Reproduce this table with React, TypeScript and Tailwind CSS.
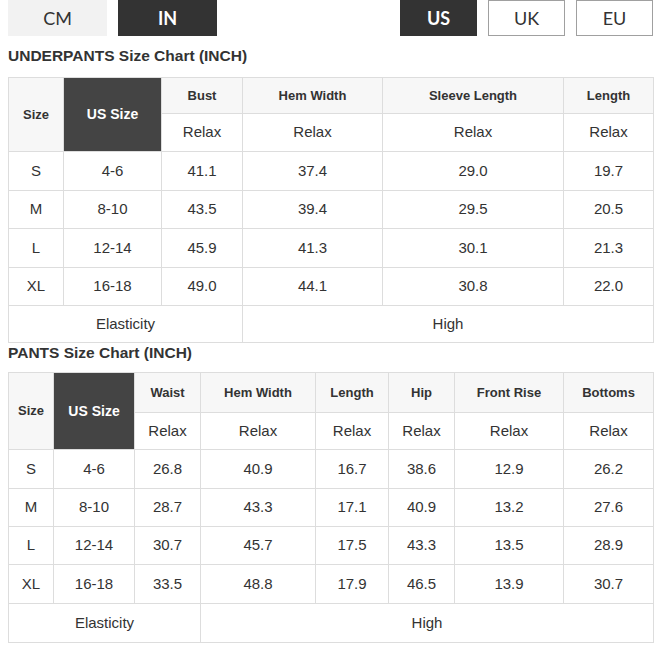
const font = { fontFamily: '"Liberation Sans", Arial, sans-serif' };

type Table = {
  title: string;
  widths: number[];
  headers: string[];
  rows: string[][];
  elasticSpan: number;
  headH: [number, number];
  rowH: number[];
};

const TABLES: Table[] = [
  {
    title: "UNDERPANTS Size Chart (INCH)",
    widths: [55, 98, 81, 140, 181, 90],
    headers: ["Bust", "Hem Width", "Sleeve Length", "Length"],
    rows: [
      ["S", "4-6", "41.1", "37.4", "29.0", "19.7"],
      ["M", "8-10", "43.5", "39.4", "29.5", "20.5"],
      ["L", "12-14", "45.9", "41.3", "30.1", "21.3"],
      ["XL", "16-18", "49.0", "44.1", "30.8", "22.0"],
    ],
    elasticSpan: 3,
    headH: [36, 38],
    rowH: [39, 38, 39, 38, 37],
  },
  {
    title: "PANTS Size Chart (INCH)",
    widths: [45, 81, 66, 115, 73, 66, 109, 90],
    headers: ["Waist", "Hem Width", "Length", "Hip", "Front Rise", "Bottoms"],
    rows: [
      ["S", "4-6", "26.8", "40.9", "16.7", "38.6", "12.9", "26.2"],
      ["M", "8-10", "28.7", "43.3", "17.1", "40.9", "13.2", "27.6"],
      ["L", "12-14", "30.7", "45.7", "17.5", "43.3", "13.5", "28.9"],
      ["XL", "16-18", "33.5", "48.8", "17.9", "46.5", "13.9", "30.7"],
    ],
    elasticSpan: 3,
    headH: [40, 37],
    rowH: [39, 38, 38, 39, 39],
  },
];

const cell = "border border-[#dddddd] text-center align-middle p-0";

function SizeTable({ t }: { t: Table }) {
  const total = t.widths.length;
  return (
    <table className="table-fixed border-collapse w-[645px] text-[#333333]" style={font}>
      <colgroup>
        {t.widths.map((w, i) => (
          <col key={i} style={{ width: w }} />
        ))}
      </colgroup>
      <tbody>
        <tr style={{ height: t.headH[0] }}>
          <td rowSpan={2} className={`${cell} bg-[#f7f7f7] text-[13px] font-bold`}>
            Size
          </td>
          <td rowSpan={2} className={`${cell} bg-[#444444] text-white text-[14px] font-bold`}>
            US Size
          </td>
          {t.headers.map((h) => (
            <td key={h} className={`${cell} bg-[#f7f7f7] text-[13px] font-bold`}>
              {h}
            </td>
          ))}
        </tr>
        <tr style={{ height: t.headH[1] }}>
          {t.headers.map((h) => (
            <td key={h} className={`${cell} text-[15px]`}>
              Relax
            </td>
          ))}
        </tr>
        {t.rows.map((r, ri) => (
          <tr key={r[0]} style={{ height: t.rowH[ri] }}>
            {r.map((v, i) => (
              <td key={i} className={`${cell} text-[15px]`}>
                {v}
              </td>
            ))}
          </tr>
        ))}
        <tr style={{ height: t.rowH[4] }}>
          <td colSpan={t.elasticSpan} className={`${cell} text-[15px]`}>
            Elasticity
          </td>
          <td colSpan={total - t.elasticSpan} className={`${cell} text-[15px]`}>
            High
          </td>
        </tr>
      </tbody>
    </table>
  );
}

function UnitButton({ label, active, wide, outlined }: { label: string; active?: boolean; wide?: boolean; outlined?: boolean }) {
  const base = "flex items-center justify-center h-[36px] text-[18px]";
  const width = wide ? "w-[99px]" : "w-[77px]";
  const look = active
    ? "bg-[#333333] text-white font-bold"
    : outlined
      ? "bg-white border border-[#a0a0a0] text-[#333333]"
      : "bg-[#f2f2f2] text-[#333333]";
  return (
    <div className={`${base} ${width} ${look}`} style={{ fontFamily: 'Lato, "Open Sans", sans-serif' }}>
      {label}
    </div>
  );
}

export default function App() {
  return (
    <div className="w-[668px] h-[651px] bg-white overflow-hidden">
      <div className="flex items-start pl-[8px] pr-[15px]">
        <div className="flex gap-[11px]">
          <UnitButton label="CM" wide />
          <UnitButton label="IN" wide active />
        </div>
        <div className="flex gap-[11px] ml-auto">
          <UnitButton label="US" active />
          <UnitButton label="UK" outlined />
          <UnitButton label="EU" outlined />
        </div>
      </div>
      <div className="pl-[8px]">
        <div className="mt-[10px] h-[20px] leading-[20px] text-[15.5px] font-bold text-[#333333]" style={font}>
          {TABLES[0].title}
        </div>
        <div className="mt-[11px]">
          <SizeTable t={TABLES[0]} />
        </div>
        <div className="h-[20px] leading-[20px] text-[15.5px] font-bold text-[#333333]" style={font}>
          {TABLES[1].title}
        </div>
        <div className="mt-[9px]">
          <SizeTable t={TABLES[1]} />
        </div>
      </div>
    </div>
  );
}
